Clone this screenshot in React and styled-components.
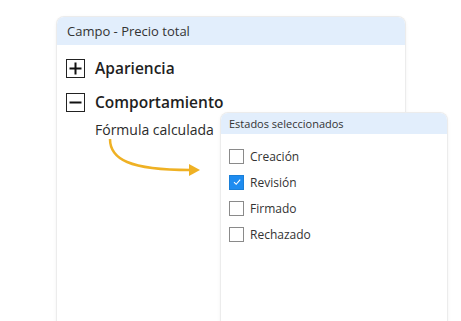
import React from "react"
import styled, { createGlobalStyle } from "styled-components"

const Global = createGlobalStyle`
  html, body {
    margin: 0;
    background: #ffffff;
    font-family: "Open Sans", "Noto Sans", sans-serif;
    color: #2b2b2b;
  }
`

const Stage = styled.div`
  width: 461px;
  height: 321px;
  overflow: hidden;
  padding: 17px 0 0 57px;
  box-sizing: border-box;
`

const Panel = styled.div`
  position: relative;
  width: ${p => p.w}px;
  height: ${p => p.h}px;
  background: #fff;
  border-radius: 7px 7px 0 0;
  box-shadow: 0 0 0 1px #ececec, 0 1px 4px rgba(0, 0, 0, 0.08);
`

const PanelHeader = styled.div`
  display: flex;
  align-items: center;
  height: ${p => p.h}px;
  padding-left: ${p => p.pad}px;
  background: #e2eefc;
  border-radius: 7px 7px 0 0;
  font-size: ${p => p.size}px;
  color: #333;
`

const Body = styled.div`
  display: flex;
  flex-direction: column;
  padding: 13px 0 0 9px;
`

const Section = styled.div`
  display: flex;
  align-items: center;
  gap: 10px;
  height: 20px;
  margin-bottom: 14px;
  font-size: 15.5px;
  font-weight: 600;
  color: #1f1f1f;
`

const ToggleBox = styled.div`
  width: 17px;
  height: 17px;
  border: 1px solid #222;
  display: flex;
  align-items: center;
  justify-content: center;
`

const SubItem = styled.div`
  padding-left: 29px;
  margin-top: -6px;
  font-size: 14px;
  color: #2b2b2b;
`

const Arrow = styled.svg`
  display: block;
  margin: -2px 0 0 31px;
`

const Popup = styled.div`
  position: absolute;
  left: 164px;
  top: 96px;
`

const List = styled.div`
  display: flex;
  flex-direction: column;
  gap: 10px;
  padding: 14px 0 0 8px;
`

const Option = styled.label`
  display: flex;
  align-items: center;
  gap: 6px;
  height: 16px;
  font-size: 12px;
  color: #333;
`

const Check = styled.span`
  width: 13px;
  height: 13px;
  border: 1px solid ${p => (p.on ? "#1a7fd8" : "#8a8a8a")};
  background: ${p => (p.on ? "#1e8cf0" : "#fff")};
  display: flex;
  align-items: center;
  justify-content: center;
`

const states = [
  { name: "Creación", on: false },
  { name: "Revisión", on: true },
  { name: "Firmado", on: false },
  { name: "Rechazado", on: false },
]

export default function App() {
  return (
    <Stage>
      <Global />
      <Panel w={348} h={310}>
        <PanelHeader h={28} pad={10} size={13}>Campo - Precio total</PanelHeader>
        <Body>
          <Section>
            <ToggleBox>
              <svg width="15" height="15" viewBox="0 0 15 15">
                <path d="M1.5 7.5h12M7.5 1.5v12" stroke="#111" strokeWidth="2" />
              </svg>
            </ToggleBox>
            Apariencia
          </Section>
          <Section>
            <ToggleBox>
              <svg width="15" height="15" viewBox="0 0 15 15">
                <path d="M1.5 7.5h12" stroke="#111" strokeWidth="2" />
              </svg>
            </ToggleBox>
            Comportamiento
          </Section>
          <SubItem>Fórmula calculada</SubItem>
          <Arrow width="106" height="42" viewBox="0 0 106 42">
            <path d="M13 2 C13 22 32 33 93 33" fill="none" stroke="#efb124" strokeWidth="2.5" />
            <path d="M92 27 L103 33 L92 39 Z" fill="#efb124" />
          </Arrow>
        </Body>
        <Popup>
          <Panel w={226} h={220}>
            <PanelHeader h={21} pad={8} size={11}>Estados seleccionados</PanelHeader>
            <List>
              {states.map(s => (
                <Option key={s.name}>
                  <Check on={s.on}>
                    {s.on && (
                      <svg width="10" height="10" viewBox="0 0 10 10">
                        <path d="M2 5.2 L4.2 7.3 L8.2 2.6" fill="none" stroke="#fff" strokeWidth="1.1" />
                      </svg>
                    )}
                  </Check>
                  {s.name}
                </Option>
              ))}
            </List>
          </Panel>
        </Popup>
      </Panel>
    </Stage>
  )
}
